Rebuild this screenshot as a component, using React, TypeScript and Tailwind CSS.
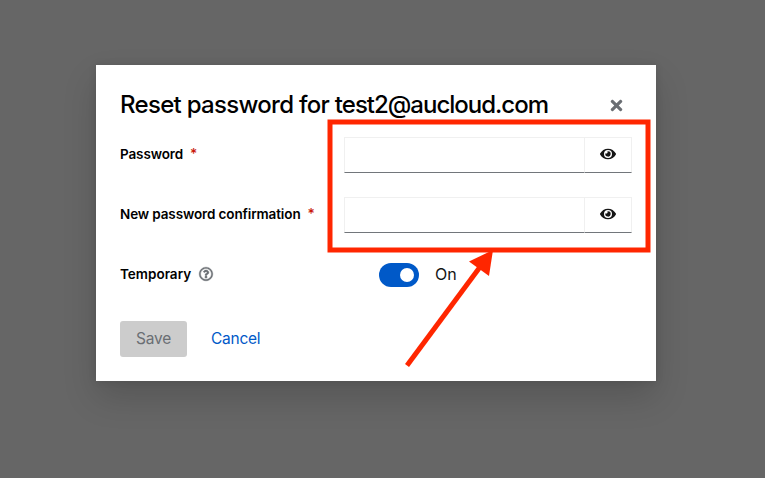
import { FaEye, FaRegQuestionCircle, FaTimes } from "react-icons/fa";

function PasswordField({ label }: { label: string }) {
  return (
    <div className="flex h-9 w-[288px]">
      <input
        type="password"
        aria-label={label}
        className="w-[241px] border border-[#f0f0f0] border-b-[#72767b] bg-white outline-none"
      />
      <button
        type="button"
        aria-label={"Show " + label}
        className="flex w-[47px] items-center justify-center border border-l-0 border-[#f0f0f0] border-b-[#72767b] text-[#151515]"
      >
        <FaEye size={16} className="-translate-y-px" />
      </button>
    </div>
  );
}

function Required() {
  return <span className="ml-[7px] text-[14px] font-medium text-[#c9190b]">*</span>;
}

export default function App() {
  return (
    <div className="relative flex h-[478px] w-[765px] overflow-hidden bg-[#666666] pt-[65px] pl-24 font-['Inter',sans-serif] text-[#151515]">
      <div className="h-[316px] w-[560px] bg-white px-6 pt-6 shadow-[0_16px_32px_rgba(3,3,3,0.16),0_0_8px_rgba(3,3,3,0.1)]">
        <div className="flex h-8 items-center justify-between">
          <h1 className="text-[24px] leading-8 font-medium tracking-[-0.7px] whitespace-nowrap text-black">
            Reset password for <span className="tracking-[-1px]">test2@aucloud.com</span>
          </h1>
          <button type="button" aria-label="Close" className="mt-px mr-[7.5px] text-[#6a6e73]">
            <FaTimes size={17} />
          </button>
        </div>

        <form className="mt-4 flex flex-col gap-6">
          <div className="flex h-9 items-center">
            <label className="w-56 pb-[3px] text-[13.5px] leading-5 font-semibold tracking-[-0.12px] whitespace-nowrap text-black">
              Password<Required />
            </label>
            <PasswordField label="Password" />
          </div>
          <div className="flex h-9 items-center">
            <label className="w-56 pb-[3px] text-[13.5px] leading-5 font-semibold tracking-[-0.12px] whitespace-nowrap text-black">
              New password confirmation<Required />
            </label>
            <PasswordField label="New password confirmation" />
          </div>
          <div className="flex h-9 items-center">
            <label className="flex w-[259px] items-center pb-[3px] text-[13.5px] leading-5 font-semibold text-black">
              Temporary
              <FaRegQuestionCircle size={14} stroke="currentColor" strokeWidth={16} className="ml-2 overflow-visible text-[#6a6e73]" />
            </label>
            <span className="flex h-6 w-10 items-center justify-end rounded-full bg-[#0059c8] pr-[5px]">
              <span className="size-3.5 rounded-full bg-white" />
            </span>
            <span className="ml-4 pb-0.5 text-[16px]">On</span>
          </div>
        </form>

        <div className="mt-7 flex h-9 items-center">
          <button type="button" className="h-9 w-[67px] rounded-[3px] bg-[#cccccc] text-[15.5px] tracking-[-0.2px] text-[#6a6e73]">
            Save
          </button>
          <button type="button" className="ml-6 text-[15.5px] tracking-[-0.25px] text-[#0059c8]">
            Cancel
          </button>
        </div>
      </div>

      <svg className="pointer-events-none absolute inset-0" width="765" height="478" fill="none">
        <rect x="330" y="122" width="318" height="128" stroke="#ff2600" strokeWidth="5" />
        <path d="M407 365.5 L480 267" stroke="#ff2600" strokeWidth="5" />
        <path d="M493 250 L469 261.5 L489 276 Z" fill="#ff2600" />
      </svg>
    </div>
  );
}
